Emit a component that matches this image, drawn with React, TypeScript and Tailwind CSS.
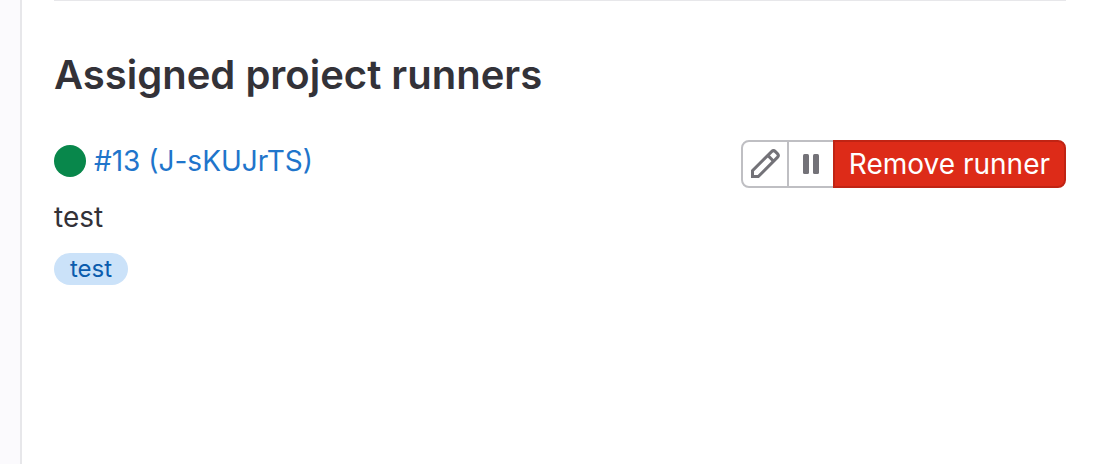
import React from "react";

function PencilIcon() {
  return (
    <svg viewBox="0 0 16 16" className="size-8 shrink-0" fill="none" stroke="currentColor" strokeWidth="1.5" aria-hidden="true">
      <path d="M1.75 14.25v-2.9L11.3 1.8a1.35 1.35 0 0 1 1.9 0l1 1a1.35 1.35 0 0 1 0 1.9L4.65 14.25z" />
      <path d="m9.4 3.7 2.9 2.9" />
    </svg>
  );
}

function PauseIcon() {
  return (
    <svg viewBox="0 0 16 16" className="size-8 shrink-0" fill="currentColor" aria-hidden="true">
      <rect x="4" y="3" width="3" height="10" rx="0.75" />
      <rect x="9" y="3" width="3" height="10" rx="0.75" />
    </svg>
  );
}

const iconButton =
  "flex size-12 items-center justify-center border-2 border-[#bfbfc3] bg-white text-[#737278]";

export default function App() {
  return (
    <div className="flex min-h-screen bg-white font-['Inter','Liberation_Sans',sans-serif] text-[28px] leading-10 text-[#333238]">
      <aside className="w-[22px] shrink-0 border-r-2 border-[#e7e7ea] bg-[#fbfafd]" />
      <main className="min-w-0 flex-1 pr-[52px] pl-8">
        <section className="border-t border-[#e7e7ea]">
          <h2 className="pt-12 text-[40px] leading-[51px] font-semibold">Assigned project runners</h2>
          <div className="mt-10 flex items-start justify-between gap-4">
            <div className="pt-px">
              <div className="flex items-center gap-2">
                <span className="size-8 rounded-full bg-[#08874b]" role="img" aria-label="Online" />
                <a href="#runner-13" className="text-[#1f75cb]">#13 (J-sKUJrTS)</a>
              </div>
              <p className="mt-4">test</p>
              <span className="mt-4 flex h-8 w-fit items-center rounded-full bg-[#cbe2f9] px-4 text-2xl text-[#0b5cad]">
                test
              </span>
            </div>
            <div className="flex shrink-0" role="group" aria-label="Runner actions">
              <button type="button" aria-label="Edit" className={`${iconButton} rounded-l-lg`}>
                <PencilIcon />
              </button>
              <button type="button" aria-label="Pause" className={`${iconButton} -ml-0.5`}>
                <PauseIcon />
              </button>
              <button
                type="button"
                className="-ml-0.5 flex h-12 items-center rounded-r-lg border-2 border-[#c02414] bg-[#dd2b18] px-3.5 text-white"
              >
                Remove runner
              </button>
            </div>
          </div>
        </section>
      </main>
    </div>
  );
}
